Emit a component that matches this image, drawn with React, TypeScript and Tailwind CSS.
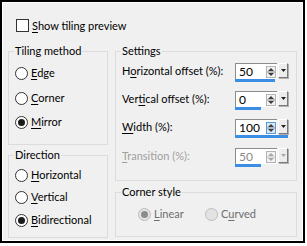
import React from "react";

function Radio({ checked, disabled }: { checked?: boolean; disabled?: boolean }) {
  return (
    <span
      className={`flex h-[13px] w-[13px] shrink-0 items-center justify-center rounded-full border ${
        disabled ? "border-[#bcbcbc] bg-[#e3e3e3]" : "border-[#333333] bg-white"
      }`}
    >
      {checked && (
        <span className={`h-[7px] w-[7px] rounded-full ${disabled ? "bg-[#8c8c8c]" : "bg-[#1a1a1a]"}`} />
      )}
    </span>
  );
}

function Label({ pre, u, post }: { pre?: string; u: string; post?: string }) {
  return (
    <span className="whitespace-nowrap">
      {pre}
      <span className="underline underline-offset-[2px] decoration-[1px]">{u}</span>
      {post}
    </span>
  );
}

function RadioRow({
  checked,
  disabled,
  children,
  className,
}: {
  checked?: boolean;
  disabled?: boolean;
  children: React.ReactNode;
  className?: string;
}) {
  return (
    <div className={`flex h-4 items-center ${className ?? ""}`}>
      <Radio checked={checked} disabled={disabled} />
      <span className={`ml-[3px] ${disabled ? "text-[#6d6d6d]" : "text-black"}`}>{children}</span>
    </div>
  );
}

function Spinner({ disabled, hot }: { disabled?: boolean; hot?: boolean }) {
  const c = disabled ? "#a8a8a8" : "#3c3c3c";
  return (
    <svg width="10" height="12" viewBox="0 0 10 12" className="shrink-0">
      <rect x="0.5" y="0.5" width="9" height="11" fill={hot ? "#d6e8f8" : "#f2f2f2"} stroke={hot ? "#5a9ad8" : "#b4b4b4"} />
      <path d="M5 2 L8 5 L2 5 Z" fill={c} />
      <line x1="1" y1="6" x2="9" y2="6" stroke={disabled ? "#c8c8c8" : "#8a8a8a"} />
      <path d="M2 7 L8 7 L5 10 Z" fill={c} />
    </svg>
  );
}

function NumBox({ value, bar, disabled, hot }: { value: string; bar: number; disabled?: boolean; hot?: boolean }) {
  return (
    <div className="flex flex-col">
      <div className="flex">
        <div className="flex h-[16px] w-[42px] items-center border-l border-t border-[#8c8c8c] bg-white pl-[3px] pr-[1px]">
          <span className={`flex-1 text-[12px] leading-none ${disabled ? "text-[#8a8a8a]" : "text-black"}`}>{value}</span>
          <Spinner disabled={disabled} hot={hot} />
        </div>
        <div className="ml-[1px] flex h-[15px] w-[10px] items-center justify-center border border-b-[#7a7a7a] border-l-white border-r-[#7a7a7a] border-t-white bg-[#ececec] shadow-[1px_1px_0_#b0b0b0]">
          <svg width="5" height="3" viewBox="0 0 5 3">
            <path d="M0 0 L5 0 L2.5 3 Z" fill={disabled ? "#a8a8a8" : "#202020"} />
          </svg>
        </div>
      </div>
      <div className="h-[3px] bg-[#3b8ee4]" style={{ width: bar }} />
    </div>
  );
}

function SettingRow({
  label,
  value,
  bar,
  disabled,
  hot,
  className,
}: {
  label: React.ReactNode;
  value: string;
  bar: number;
  disabled?: boolean;
  hot?: boolean;
  className?: string;
}) {
  return (
    <div className={`flex items-start ${className ?? ""}`}>
      <div className={`flex h-[16px] w-[113px] items-center ${disabled ? "text-[#a0a0a0]" : "text-black"}`}>{label}</div>
      <NumBox value={value} bar={bar} disabled={disabled} hot={hot} />
    </div>
  );
}

export default function App() {
  return (
    <div className="min-h-screen bg-white font-['Lato',sans-serif] text-[11px] leading-4 text-black">
      <div className="h-[243px] w-[305px] border-2 border-black">
        <div className="h-full border border-white bg-[#f0f0f0]">
          {/* checkbox row */}
          <div className="ml-[13px] mt-[16px] flex h-[13px] items-center">
            <span className="h-[13px] w-[13px] border border-[#333333] bg-white" />
            <span className="ml-[3px]">
              <Label u="S" post="how tiling preview" />
            </span>
          </div>

          <div className="mt-[11px] flex pl-[5px]">
            {/* left column */}
            <div className="flex w-[100px] flex-col">
              <fieldset className="h-[102px] min-w-0 border border-[#dcdcdc]">
                <legend className="ml-[5px] h-4 px-[1px] leading-4">Tiling method</legend>
                <div className="pl-[6px]">
                  <RadioRow className="mt-[6px]">
                    <Label u="E" post="dge" />
                  </RadioRow>
                  <RadioRow className="mt-[9px]">
                    <Label u="C" post="orner" />
                  </RadioRow>
                  <RadioRow checked className="mt-[8px]">
                    <Label u="M" post="irror" />
                  </RadioRow>
                </div>
              </fieldset>
              <fieldset className="mt-[2px] h-[91px] min-w-0 border border-[#dcdcdc]">
                <legend className="ml-[5px] h-4 px-[1px] leading-4">Direction</legend>
                <div className="pl-[6px]">
                  <RadioRow className="mt-[4px]">
                    <Label u="H" post="orizontal" />
                  </RadioRow>
                  <RadioRow className="mt-[6px]">
                    <Label u="V" post="ertical" />
                  </RadioRow>
                  <RadioRow checked className="mt-[7px]">
                    <Label u="B" post="idirectional" />
                  </RadioRow>
                </div>
              </fieldset>
            </div>

            {/* right column */}
            <div className="ml-[7px] flex w-[182px] flex-col">
              <fieldset className="h-[138px] min-w-0 border border-[#dcdcdc]">
                <legend className="ml-[5px] h-4 px-[1px] leading-4">Settings</legend>
                <div className="pl-[6px]">
                  <SettingRow className="mt-[4px]" label={<Label pre="H" u="o" post="rizontal offset (%):" />} value="50" bar={40} />
                  <SettingRow className="mt-[9px]" label={<Label pre="Ver" u="t" post="ical offset (%):" />} value="0" bar={26} />
                  <SettingRow className="mt-[9px]" label={<Label u="W" post="idth (%):" />} value="100" bar={53} hot />
                  <SettingRow className="mt-[10px]" label={<Label u="T" post="ransition (%):" />} value="50" bar={26} disabled />
                </div>
              </fieldset>
              <fieldset className="mt-[3px] h-[53px] min-w-0 border border-[#dcdcdc]">
                <legend className="ml-[5px] h-4 px-[1px] leading-4">Corner style</legend>
                <div className="mt-[6px] flex pl-[22px]">
                  <div className="w-[67px]">
                    <RadioRow checked disabled>
                      <Label u="L" post="inear" />
                    </RadioRow>
                  </div>
                  <RadioRow disabled>
                    <Label pre="C" u="u" post="rved" />
                  </RadioRow>
                </div>
              </fieldset>
            </div>
          </div>
        </div>
      </div>
    </div>
  );
}
